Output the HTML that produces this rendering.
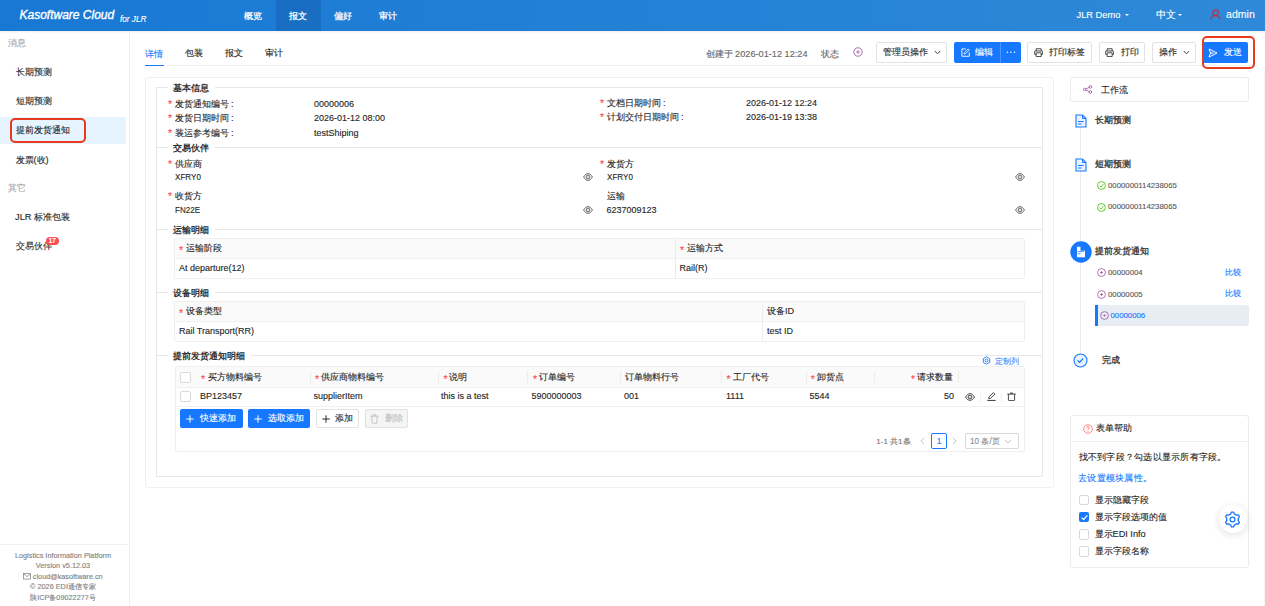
<!DOCTYPE html>
<html><head><meta charset="utf-8">
<style>
*{box-sizing:border-box;margin:0;padding:0}
html,body{width:1265px;height:606px;overflow:hidden;background:#fff}
body{font-family:"Liberation Sans",sans-serif;color:#262626;position:relative;font-size:9px;line-height:12px;-webkit-text-stroke:0.12px currentColor}
.a{position:absolute;white-space:nowrap}
.hdr{left:0;top:0;width:1265px;height:31px;background:linear-gradient(90deg,#1878d3,#2f89d8);box-shadow:0 1px 2px rgba(0,0,0,0.08)}
.nav{color:#fff;font-size:9.2px;top:9.5px;-webkit-text-stroke:0.25px #fff}
.navact{left:276px;top:0;width:45px;height:31px;background:rgba(0,40,100,0.16)}
.side{left:0;top:31px;width:129.5px;height:575px;border-right:1.5px solid #efefef}
.sgrp{color:#a6a6a6;font-size:9.3px}
.sitem{color:#262626;font-size:9.3px}
.foot{color:#7f7f7f;font-size:7.3px;line-height:10.5px;text-align:center;width:126px;left:0}
.tab{font-size:9.2px;color:#262626}
.btn{border:1px solid #e2e2e2;border-radius:2px;height:21px;background:#fff}
.bbtn{background:#1677ff;border-radius:2px;height:21px;color:#fff}
.star{color:#ff4d4f;font-size:10.5px;line-height:10px}
.lbl{font-size:9.2px;color:#262626}
.val{font-size:9px;color:#262626}
.leg{font-size:9.3px;font-weight:bold;color:#333;background:#fff;padding:0 5.5px;-webkit-text-stroke:0}
.hline{height:1px;background:#e8e8e8}
.tbl{border:1px solid #efefef;border-radius:2px}
.th{background:#fafafa}
.cdiv{width:1px;background:#ececec}
</style></head><body>

<!-- HEADER -->
<div class="a hdr"></div>
<div class="a navact"></div>
<div class="a" style="left:19.5px;top:8.5px;color:#fff;font-size:12px;font-style:italic;-webkit-text-stroke:0.35px #fff">Kasoftware Cloud</div>
<div class="a" style="left:120px;top:14px;color:#fff;font-size:8.2px;font-style:italic">for JLR</div>
<div class="a nav" style="left:244px">概览</div>
<div class="a nav" style="left:289px">报文</div>
<div class="a nav" style="left:334px">偏好</div>
<div class="a nav" style="left:379px">审计</div>
<div class="a" style="left:1076.5px;top:9px;color:#fff;font-size:9.3px">JLR Demo</div>
<div class="a" style="left:1124.5px;top:14.3px;width:0;height:0;border-left:2px solid transparent;border-right:2px solid transparent;border-top:2.5px solid #fff"></div>
<div class="a" style="left:1156px;top:9px;color:#fff;font-size:9.6px">中文</div>
<div class="a" style="left:1178px;top:14.3px;width:0;height:0;border-left:2px solid transparent;border-right:2px solid transparent;border-top:2.5px solid #fff"></div>
<svg class="a" style="left:1210px;top:9px" width="11" height="11" viewBox="0 0 11 11"><circle cx="5.5" cy="3.6" r="2.8" fill="none" stroke="#c0303f" stroke-width="1.2"/><path d="M1 10.4 Q1 6.6 5.5 6.6 Q10 6.6 10 10.4" fill="none" stroke="#c0303f" stroke-width="1.2"/></svg>
<div class="a" style="left:1226px;top:8px;color:#fff;font-size:10.6px">admin</div>

<!-- SIDEBAR -->
<div class="a side"></div>
<div class="a sgrp" style="left:7.5px;top:37px">消息</div>
<div class="a sitem" style="left:15.5px;top:66px">长期预测</div>
<div class="a sitem" style="left:15.5px;top:95px">短期预测</div>
<div class="a" style="left:0;top:117px;width:126px;height:27px;background:#e6f4ff;border-radius:0 2px 2px 0"></div>
<div class="a" style="left:9.5px;top:118px;width:76px;height:24.5px;border:2px solid #e8391f;border-radius:5px"></div>
<div class="a sitem" style="left:15.5px;top:124px">提前发货通知</div>
<div class="a sitem" style="left:15.5px;top:153.5px">发票(收)</div>
<div class="a sgrp" style="left:7.5px;top:182px">其它</div>
<div class="a sitem" style="left:15px;top:210.5px">JLR 标准包装</div>
<div class="a sitem" style="left:15.5px;top:239.5px">交易伙伴</div>
<div class="a" style="left:46px;top:237px;width:12.5px;height:8px;background:#ff4d4f;border-radius:4px;color:#fff;font-size:6.3px;line-height:8px;text-align:center;font-weight:bold">17</div>
<div class="a" style="left:0;top:544px;width:128px;height:1px;background:#efefef"></div>
<div class="a foot" style="top:550.5px">Logistics Information Platform</div>
<div class="a foot" style="top:561px">Version v5.12.03</div>
<div class="a foot" style="top:571.5px"><svg width="8" height="6.5" viewBox="0 0 8 6.5" style="vertical-align:-1px;margin-right:1.5px"><rect x="0.45" y="0.45" width="7.1" height="5.6" fill="none" stroke="#8a8a8a" stroke-width="0.8"/><path d="M0.6 0.8L4 3.6L7.4 0.8" fill="none" stroke="#8a8a8a" stroke-width="0.8"/></svg>cloud@kasoftware.cn</div>
<div class="a foot" style="top:582px">© 2026 EDI通信专家</div>
<div class="a foot" style="top:592.5px">陕ICP备09022277号</div>

<!-- TABS -->
<div class="a tab" style="left:145px;top:47.5px;color:#1677ff">详情</div>
<div class="a tab" style="left:185px;top:47px">包装</div>
<div class="a tab" style="left:225px;top:47px">报文</div>
<div class="a tab" style="left:265px;top:47px">审计</div>
<div class="a" style="left:145px;top:65.3px;width:1108px;height:1px;background:#f0f0f0"></div>
<div class="a" style="left:145px;top:64.5px;width:19px;height:1.6px;background:#1677ff"></div>

<!-- ACTION BAR -->
<div class="a" style="left:705.5px;top:47.5px;font-size:9.2px;color:#666">创建于 2026-01-12 12:24</div>
<div class="a" style="left:821px;top:47.5px;font-size:9.2px;color:#666">状态</div>
<svg class="a" style="left:852.7px;top:47.1px" width="10" height="10" viewBox="0 0 10 10"><circle cx="5" cy="5" r="4.2" fill="none" stroke="#a3579f" stroke-width="0.9"/><path d="M5 3.2V6.8M3.2 5H6.8" stroke="#a3579f" stroke-width="0.85"/></svg>
<div class="a btn" style="left:875.5px;top:41.5px;width:71.5px"></div>
<div class="a" style="left:883px;top:46px;font-size:9.2px">管理员操作</div>
<svg class="a" style="left:934px;top:50px" width="7" height="5" viewBox="0 0 7 5"><path d="M0.8 1 L3.5 3.8 L6.2 1" fill="none" stroke="#444" stroke-width="1"/></svg>
<div class="a bbtn" style="left:953.5px;top:41.5px;width:67.5px"></div>
<div class="a" style="left:999.5px;top:41.5px;width:1px;height:21px;background:#4a96ff"></div>
<svg class="a" style="left:960.5px;top:47.5px" width="9.2" height="9.2" viewBox="0 0 10 10"><path d="M5.2 1H1V9H9V4.8" fill="none" stroke="#fff" stroke-width="1"/><path d="M3.4 6.6L3.8 5L7.8 1L9 2.2L5 6.2Z" fill="none" stroke="#fff" stroke-width="0.9" stroke-linejoin="round"/></svg>
<div class="a" style="left:975px;top:46px;font-size:9.2px;color:#fff">编辑</div>
<svg class="a" style="left:1005.5px;top:51px" width="10" height="3" viewBox="0 0 10 3"><circle cx="1.3" cy="1.3" r="0.75" fill="#fff"/><circle cx="4.9" cy="1.3" r="0.75" fill="#fff"/><circle cx="8.5" cy="1.3" r="0.75" fill="#fff"/></svg>
<div class="a btn" style="left:1027px;top:41.5px;width:65px"></div>
<svg class="a" style="left:1033.7px;top:47.6px" width="9.3" height="9.3" viewBox="0 0 10 10"><path d="M2.3 3.2V0.8H7.7V3.2M2.3 7H1.2Q0.7 7 0.7 6.5V3.7Q0.7 3.2 1.2 3.2H8.8Q9.3 3.2 9.3 3.7V6.5Q9.3 7 8.8 7H7.7M2.3 5.2H7.7V9.2H2.3Z" fill="none" stroke="#333" stroke-width="0.95" stroke-linejoin="round"/></svg>
<div class="a" style="left:1049px;top:46px;font-size:9.2px">打印标签</div>
<div class="a btn" style="left:1099px;top:41.5px;width:46px"></div>
<svg class="a" style="left:1105.2px;top:47.6px" width="9.3" height="9.3" viewBox="0 0 10 10"><path d="M2.3 3.2V0.8H7.7V3.2M2.3 7H1.2Q0.7 7 0.7 6.5V3.7Q0.7 3.2 1.2 3.2H8.8Q9.3 3.2 9.3 3.7V6.5Q9.3 7 8.8 7H7.7M2.3 5.2H7.7V9.2H2.3Z" fill="none" stroke="#333" stroke-width="0.95" stroke-linejoin="round"/></svg>
<div class="a" style="left:1120.5px;top:46px;font-size:9.2px">打印</div>
<div class="a btn" style="left:1152px;top:41.5px;width:44px"></div>
<div class="a" style="left:1158.5px;top:46px;font-size:9.2px">操作</div>
<svg class="a" style="left:1182.5px;top:50px" width="7" height="5" viewBox="0 0 7 5"><path d="M0.8 1 L3.5 3.8 L6.2 1" fill="none" stroke="#444" stroke-width="1"/></svg>
<div class="a bbtn" style="left:1203px;top:41.5px;width:45.3px"></div>
<svg class="a" style="left:1208px;top:47.5px" width="10" height="10" viewBox="0 0 10 10"><path d="M1 1L9 5L1 9L2.6 5Z M2.6 5H5.5" fill="none" stroke="#fff" stroke-width="1" stroke-linejoin="round"/></svg>
<div class="a" style="left:1224px;top:46px;font-size:9.2px;color:#fff">发送</div>
<div class="a" style="left:1201.5px;top:35.5px;width:53.3px;height:33.3px;border:2px solid #e8391f;border-radius:5px"></div>

<!-- MAIN CARD -->
<div class="a" style="left:145px;top:77px;width:908.5px;height:410.5px;border:1px solid #f0f0f0;border-radius:3px"></div>
<div class="a" style="left:156px;top:87px;width:887px;height:389.5px;border:1px solid #e8e8e8;border-top:none"></div>
<div class="a hline" style="left:156px;top:87px;width:887px"></div>
<div class="a hline" style="left:156px;top:147px;width:887px"></div>
<div class="a hline" style="left:156px;top:229px;width:887px"></div>
<div class="a hline" style="left:156px;top:292px;width:887px"></div>
<div class="a hline" style="left:156px;top:355px;width:887px"></div>
<div class="a leg" style="left:167.5px;top:81.5px">基本信息</div>
<div class="a leg" style="left:167.5px;top:142px">交易伙伴</div>
<div class="a leg" style="left:167.5px;top:223.5px">运输明细</div>
<div class="a leg" style="left:167.5px;top:286.5px">设备明细</div>
<div class="a leg" style="left:167.5px;top:349.5px">提前发货通知明细</div>

<!-- basic info -->
<div class="a star" style="left:168px;top:99px">*</div><div class="a lbl" style="left:174.5px;top:98px">发货通知编号<span style="margin-left:2.6px">:</span></div><div class="a val" style="left:314px;top:98px">00000006</div>
<div class="a star" style="left:168px;top:113px">*</div><div class="a lbl" style="left:174.5px;top:112px">发货日期时间<span style="margin-left:2.6px">:</span></div><div class="a val" style="left:314px;top:112px">2026-01-12 08:00</div>
<div class="a star" style="left:168px;top:127.5px">*</div><div class="a lbl" style="left:174.5px;top:126.5px">装运参考编号<span style="margin-left:2.6px">:</span></div><div class="a val" style="left:314px;top:126.5px">testShiping</div>
<div class="a star" style="left:600px;top:98px">*</div><div class="a lbl" style="left:606.5px;top:97px">文档日期时间<span style="margin-left:2.6px">:</span></div><div class="a val" style="left:746px;top:97px">2026-01-12 12:24</div>
<div class="a star" style="left:600px;top:112px">*</div><div class="a lbl" style="left:606.5px;top:111px">计划交付日期时间<span style="margin-left:2.6px">:</span></div><div class="a val" style="left:746px;top:111px">2026-01-19 13:38</div>

<!-- partners -->
<div class="a star" style="left:168px;top:158.5px">*</div><div class="a lbl" style="left:174.5px;top:157.5px">供应商</div><div class="a val" style="left:174.5px;top:171px;transform:scaleX(0.87);transform-origin:0 0;font-size:9.3px">XFRY0</div>
<div class="a star" style="left:168px;top:191px">*</div><div class="a lbl" style="left:174.5px;top:190px">收货方</div><div class="a val" style="left:174.5px;top:204px;transform:scaleX(0.87);transform-origin:0 0;font-size:9.3px">FN22E</div>
<div class="a star" style="left:600px;top:158.5px">*</div><div class="a lbl" style="left:606.5px;top:157.5px">发货方</div><div class="a val" style="left:606.5px;top:171px;transform:scaleX(0.87);transform-origin:0 0;font-size:9.3px">XFRY0</div>
<div class="a lbl" style="left:606.5px;top:190px">运输</div><div class="a val" style="left:606.5px;top:204px">6237009123</div>
<svg class="a" style="left:583px;top:172.8px" width="10" height="8" viewBox="0 0 10 8"><path d="M0.6 4C1.9 1.6 3.4 0.7 5 0.7C6.6 0.7 8.1 1.6 9.4 4C8.1 6.4 6.6 7.3 5 7.3C3.4 7.3 1.9 6.4 0.6 4Z" fill="none" stroke="#555" stroke-width="0.9"/><circle cx="5" cy="4" r="1.9" fill="none" stroke="#555" stroke-width="0.9"/><circle cx="5" cy="4" r="0.5" fill="#555"/></svg>
<svg class="a" style="left:583px;top:205.5px" width="10" height="8" viewBox="0 0 10 8"><path d="M0.6 4C1.9 1.6 3.4 0.7 5 0.7C6.6 0.7 8.1 1.6 9.4 4C8.1 6.4 6.6 7.3 5 7.3C3.4 7.3 1.9 6.4 0.6 4Z" fill="none" stroke="#555" stroke-width="0.9"/><circle cx="5" cy="4" r="1.9" fill="none" stroke="#555" stroke-width="0.9"/><circle cx="5" cy="4" r="0.5" fill="#555"/></svg>
<svg class="a" style="left:1015.2px;top:172.8px" width="10" height="8" viewBox="0 0 10 8"><path d="M0.6 4C1.9 1.6 3.4 0.7 5 0.7C6.6 0.7 8.1 1.6 9.4 4C8.1 6.4 6.6 7.3 5 7.3C3.4 7.3 1.9 6.4 0.6 4Z" fill="none" stroke="#555" stroke-width="0.9"/><circle cx="5" cy="4" r="1.9" fill="none" stroke="#555" stroke-width="0.9"/><circle cx="5" cy="4" r="0.5" fill="#555"/></svg>
<svg class="a" style="left:1015.2px;top:205.5px" width="10" height="8" viewBox="0 0 10 8"><path d="M0.6 4C1.9 1.6 3.4 0.7 5 0.7C6.6 0.7 8.1 1.6 9.4 4C8.1 6.4 6.6 7.3 5 7.3C3.4 7.3 1.9 6.4 0.6 4Z" fill="none" stroke="#555" stroke-width="0.9"/><circle cx="5" cy="4" r="1.9" fill="none" stroke="#555" stroke-width="0.9"/><circle cx="5" cy="4" r="0.5" fill="#555"/></svg>

<!-- transport table -->
<div class="a tbl" style="left:174px;top:238px;width:851px;height:40.5px"></div>
<div class="a th" style="left:175px;top:239px;width:849px;height:19px"></div>
<div class="a" style="left:175px;top:258px;width:849px;height:1px;background:#f0f0f0"></div>
<div class="a cdiv" style="left:674.5px;top:239px;height:39px"></div>
<div class="a star" style="left:179px;top:245px">*</div><div class="a lbl" style="left:186px;top:242px">运输阶段</div>
<div class="a star" style="left:680px;top:245px">*</div><div class="a lbl" style="left:687px;top:242px">运输方式</div>
<div class="a val" style="left:179px;top:262px">At departure(12)</div>
<div class="a val" style="left:679.5px;top:262px">Rail(R)</div>

<!-- equipment table -->
<div class="a tbl" style="left:174px;top:301px;width:851px;height:40.5px"></div>
<div class="a th" style="left:175px;top:302px;width:849px;height:19px"></div>
<div class="a" style="left:175px;top:321px;width:849px;height:1px;background:#f0f0f0"></div>
<div class="a cdiv" style="left:762px;top:302px;height:39px"></div>
<div class="a star" style="left:179px;top:308px">*</div><div class="a lbl" style="left:186px;top:305px">设备类型</div>
<div class="a lbl" style="left:767px;top:305px">设备ID</div>
<div class="a val" style="left:179px;top:325px">Rail Transport(RR)</div>
<div class="a val" style="left:767px;top:325px">test ID</div>

<!-- custom col -->
<svg class="a" style="left:982px;top:356.2px" width="9" height="9" viewBox="0 0 9 9"><path d="M4.5 0.8L7.7 2.65V6.35L4.5 8.2L1.3 6.35V2.65Z" fill="none" stroke="#1677ff" stroke-width="0.9"/><circle cx="4.5" cy="4.5" r="1.4" fill="none" stroke="#1677ff" stroke-width="0.9"/></svg>
<div class="a" style="left:995px;top:354.8px;font-size:8.4px;color:#3d8bff">定制列</div>

<!-- items table -->
<div class="a tbl" style="left:174.5px;top:366px;width:850px;height:85.5px"></div>
<div class="a th" style="left:175.5px;top:367px;width:848px;height:20px"></div>
<div class="a" style="left:175.5px;top:387px;width:848px;height:1px;background:#f0f0f0"></div>
<div class="a" style="left:175.5px;top:406px;width:848px;height:1px;background:#f0f0f0"></div>
<div class="a" style="left:180px;top:372px;width:11px;height:11px;border:1px solid #d9d9d9;border-radius:2px;background:#fff"></div>
<div class="a" style="left:180px;top:391px;width:11px;height:11px;border:1px solid #d9d9d9;border-radius:2px;background:#fff"></div>
<div class="a cdiv" style="left:310px;top:371px;height:12px"></div>
<div class="a cdiv" style="left:438px;top:371px;height:12px"></div>
<div class="a cdiv" style="left:527px;top:371px;height:12px"></div>
<div class="a cdiv" style="left:620px;top:371px;height:12px"></div>
<div class="a cdiv" style="left:721px;top:371px;height:12px"></div>
<div class="a cdiv" style="left:805.5px;top:371px;height:12px"></div>
<div class="a cdiv" style="left:873.5px;top:371px;height:12px"></div>
<div class="a cdiv" style="left:957.5px;top:371px;height:12px"></div>
<div class="a star" style="left:201px;top:374px">*</div><div class="a lbl" style="left:207.5px;top:371px">买方物料编号</div>
<div class="a star" style="left:315px;top:374px">*</div><div class="a lbl" style="left:321px;top:371px">供应商物料编号</div>
<div class="a star" style="left:443.5px;top:374px">*</div><div class="a lbl" style="left:449px;top:371px">说明</div>
<div class="a star" style="left:533px;top:374px">*</div><div class="a lbl" style="left:539px;top:371px">订单编号</div>
<div class="a lbl" style="left:624.5px;top:371px">订单物料行号</div>
<div class="a star" style="left:726.5px;top:374px">*</div><div class="a lbl" style="left:733px;top:371px">工厂代号</div>
<div class="a star" style="left:810.8px;top:374px">*</div><div class="a lbl" style="left:817px;top:371px">卸货点</div>
<div class="a star" style="left:911px;top:374px">*</div><div class="a lbl" style="left:917px;top:371px">请求数量</div>
<div class="a val" style="left:200px;top:390px">BP123457</div>
<div class="a val" style="left:313.5px;top:390px">supplierItem</div>
<div class="a val" style="left:441px;top:390px">this is a test</div>
<div class="a val" style="left:531.5px;top:390px">5900000003</div>
<div class="a val" style="left:624px;top:390px">001</div>
<div class="a val" style="left:726px;top:390px">1111</div>
<div class="a val" style="left:809.5px;top:390px">5544</div>
<div class="a val" style="left:944px;top:390px">50</div>
<svg class="a" style="left:965.3px;top:392.6px" width="10" height="8" viewBox="0 0 10 8"><path d="M0.6 4C1.9 1.6 3.4 0.7 5 0.7C6.6 0.7 8.1 1.6 9.4 4C8.1 6.4 6.6 7.3 5 7.3C3.4 7.3 1.9 6.4 0.6 4Z" fill="none" stroke="#333" stroke-width="0.9"/><circle cx="5" cy="4" r="1.9" fill="none" stroke="#333" stroke-width="0.9"/><circle cx="5" cy="4" r="0.5" fill="#333"/></svg>
<div class="a cdiv" style="left:980.3px;top:392.5px;height:9px;background:#f0f0f0"></div>
<svg class="a" style="left:986.5px;top:392.2px" width="9" height="9" viewBox="0 0 9 9"><path d="M1.6 6.5L2 4.9L6.4 0.6L7.9 2.1L3.5 6.4Z" fill="none" stroke="#333" stroke-width="0.9" stroke-linejoin="round"/><path d="M0.4 8.4H8.6" stroke="#333" stroke-width="1"/></svg>
<div class="a cdiv" style="left:1000.8px;top:392.5px;height:9px;background:#f0f0f0"></div>
<svg class="a" style="left:1007px;top:392px" width="9" height="9" viewBox="0 0 9 9"><path d="M0.3 2.1H8.7" stroke="#333" stroke-width="0.9"/><path d="M3 2.1V1.1Q3 0.4 3.7 0.4H5.3Q6 0.4 6 1.1V2.1Z" fill="#555"/><path d="M1.4 2.1V7.9Q1.4 8.6 2.1 8.6H6.9Q7.6 8.6 7.6 7.9V2.1" fill="none" stroke="#333" stroke-width="0.9"/></svg>

<!-- buttons -->
<div class="a bbtn" style="left:180px;top:409px;width:62.5px;height:19px"></div>
<svg class="a" style="left:186.2px;top:415px" width="8" height="8" viewBox="0 0 8 8"><path d="M4 0.3V7.7M0.3 4H7.7" stroke="#fff" stroke-width="1"/></svg>
<div class="a" style="left:200.3px;top:412.3px;font-size:9.35px;color:#fff">快速添加</div>
<div class="a bbtn" style="left:248px;top:409px;width:62px;height:19px"></div>
<svg class="a" style="left:254px;top:415px" width="8" height="8" viewBox="0 0 8 8"><path d="M4 0.3V7.7M0.3 4H7.7" stroke="#fff" stroke-width="1"/></svg>
<div class="a" style="left:268px;top:412.3px;font-size:9.35px;color:#fff">选取添加</div>
<div class="a btn" style="left:315.5px;top:409px;width:43.5px;height:19px"></div>
<svg class="a" style="left:321.5px;top:415px" width="8" height="8" viewBox="0 0 8 8"><path d="M4 0.3V7.7M0.3 4H7.7" stroke="#262626" stroke-width="1"/></svg>
<div class="a" style="left:335.3px;top:412.3px;font-size:9.35px">添加</div>
<div class="a btn" style="left:364.5px;top:409px;width:43.5px;height:19px;background:#f5f5f5"></div>
<svg class="a" style="left:370px;top:413.5px" width="9" height="10" viewBox="0 0 9 10"><path d="M0.5 2.2H8.5M3 2.2V0.8H6V2.2M1.7 2.2L2.2 9.2H6.8L7.3 2.2" fill="none" stroke="#bfbfbf" stroke-width="0.9"/></svg>
<div class="a" style="left:385px;top:412.3px;font-size:9.35px;color:#bfbfbf">删除</div>

<!-- pagination -->
<div class="a" style="left:876.3px;top:436px;font-size:8px;color:#737373">1-1 共1条</div>
<svg class="a" style="left:920px;top:437px" width="5" height="8" viewBox="0 0 5 8"><path d="M4 0.8L1 4L4 7.2" fill="none" stroke="#bfbfbf" stroke-width="0.9"/></svg>
<div class="a" style="left:931.2px;top:433px;width:15.7px;height:16px;border:1px solid #1677ff;border-radius:2px;color:#1677ff;font-size:8.5px;line-height:14px;text-align:center">1</div>
<svg class="a" style="left:952px;top:437px" width="5" height="8" viewBox="0 0 5 8"><path d="M1 0.8L4 4L1 7.2" fill="none" stroke="#bfbfbf" stroke-width="0.9"/></svg>
<div class="a" style="left:964.5px;top:433px;width:54.5px;height:16px;border:1px solid #d9d9d9;border-radius:2px"></div>
<div class="a" style="left:970px;top:436px;font-size:8.2px;color:#8c8c8c">10 条/页</div>
<svg class="a" style="left:1003.8px;top:439px" width="8" height="5" viewBox="0 0 8 5"><path d="M0.8 0.8L4 4L7.2 0.8" fill="none" stroke="#bfbfbf" stroke-width="0.9"/></svg>

<!-- RIGHT PANEL -->
<div class="a" style="left:1069.5px;top:77px;width:179px;height:25px;border:1px solid #ececec;border-radius:2px"></div>
<svg class="a" style="left:1083.4px;top:84.8px" width="9.5" height="9" viewBox="0 0 9.5 9"><rect x="0.5" y="3.4" width="2.2" height="2.2" rx="0.9" fill="none" stroke="#a3579f" stroke-width="0.9"/><circle cx="7.4" cy="1.9" r="1.3" fill="none" stroke="#a3579f" stroke-width="0.9"/><circle cx="7.4" cy="7" r="1.3" fill="none" stroke="#a3579f" stroke-width="0.9"/><path d="M2.7 4.1L6.1 2.4M2.7 4.9L6.1 6.5" stroke="#a3579f" stroke-width="0.9"/></svg>
<div class="a" style="left:1101px;top:83.5px;font-size:9.2px">工作流</div>
<div class="a" style="left:1080.3px;top:128px;width:1.2px;height:225px;background:#ececec"></div>
<svg class="a" style="left:1075px;top:114px" width="12" height="14" viewBox="0 0 12 14"><path d="M1 1H7.5L11 4.5V13H1Z" fill="#eaf2ff" stroke="#1677ff" stroke-width="1.1"/><path d="M7.5 1V4.5H11" fill="none" stroke="#1677ff" stroke-width="1"/><path d="M3 7.5H8.5M3 10H6.5" stroke="#1677ff" stroke-width="1"/></svg>
<div class="a" style="left:1095px;top:114px;font-size:9.2px;font-weight:bold;color:#444;-webkit-text-stroke:0">长期预测</div>
<svg class="a" style="left:1075px;top:157.5px" width="12" height="14" viewBox="0 0 12 14"><path d="M1 1H7.5L11 4.5V13H1Z" fill="#eaf2ff" stroke="#1677ff" stroke-width="1.1"/><path d="M7.5 1V4.5H11" fill="none" stroke="#1677ff" stroke-width="1"/><path d="M3 7.5H8.5M3 10H6.5" stroke="#1677ff" stroke-width="1"/></svg>
<div class="a" style="left:1095px;top:158px;font-size:9.2px;font-weight:bold;color:#444;-webkit-text-stroke:0">短期预测</div>
<svg class="a" style="left:1096.5px;top:181px" width="9" height="9" viewBox="0 0 9 9"><circle cx="4.5" cy="4.5" r="3.9" fill="none" stroke="#52c41a" stroke-width="0.9"/><path d="M2.6 4.6L4 6L6.4 3.2" fill="none" stroke="#52c41a" stroke-width="0.9"/></svg>
<div class="a" style="left:1108px;top:179.5px;font-size:7.8px;color:#595959">0000000114238065</div>
<svg class="a" style="left:1096.5px;top:202.5px" width="9" height="9" viewBox="0 0 9 9"><circle cx="4.5" cy="4.5" r="3.9" fill="none" stroke="#52c41a" stroke-width="0.9"/><path d="M2.6 4.6L4 6L6.4 3.2" fill="none" stroke="#52c41a" stroke-width="0.9"/></svg>
<div class="a" style="left:1108px;top:201px;font-size:7.8px;color:#595959">0000000114238065</div>
<svg class="a" style="left:1070px;top:240.6px" width="22" height="22" viewBox="0 0 22 22"><circle cx="11" cy="11" r="10.7" fill="#1677ff"/><path d="M7 5.7H10.5V9.7H15V16.3H7Z" fill="#fff"/><path d="M7.6 10.6H13.8M7.6 12.7H10.6" stroke="#4d97ff" stroke-width="1"/></svg>
<div class="a" style="left:1095px;top:245px;font-size:9.2px;font-weight:bold;color:#444;-webkit-text-stroke:0">提前发货通知</div>
<svg class="a" style="left:1096.5px;top:268px" width="9" height="9" viewBox="0 0 9 9"><circle cx="4.5" cy="4.5" r="3.9" fill="none" stroke="#a3579f" stroke-width="0.8"/><path d="M4.5 3V6M3 4.5H6" stroke="#a3579f" stroke-width="0.8"/></svg>
<div class="a" style="left:1108px;top:266.8px;font-size:7.8px;color:#595959">00000004</div>
<div class="a" style="left:1225px;top:265.5px;font-size:8.4px;color:#1677ff">比较</div>
<svg class="a" style="left:1096.5px;top:290px" width="9" height="9" viewBox="0 0 9 9"><circle cx="4.5" cy="4.5" r="3.9" fill="none" stroke="#a3579f" stroke-width="0.8"/><path d="M4.5 3V6M3 4.5H6" stroke="#a3579f" stroke-width="0.8"/></svg>
<div class="a" style="left:1108px;top:288.8px;font-size:7.8px;color:#595959">00000005</div>
<div class="a" style="left:1225px;top:287px;font-size:8.4px;color:#1677ff">比较</div>
<div class="a" style="left:1094.5px;top:304.5px;width:154px;height:21.5px;background:#e8ecf3;border-radius:0 2px 2px 0;border-left:3px solid #1677ff"></div>
<svg class="a" style="left:1099.5px;top:311px" width="9" height="9" viewBox="0 0 9 9"><circle cx="4.5" cy="4.5" r="3.9" fill="none" stroke="#a3579f" stroke-width="0.8"/><circle cx="4.5" cy="4.5" r="1.1" fill="#a3579f"/></svg>
<div class="a" style="left:1110.5px;top:310.3px;font-size:7.8px;color:#1677ff">00000006</div>
<svg class="a" style="left:1073.4px;top:352.6px" width="15" height="15" viewBox="0 0 15 15"><circle cx="7.5" cy="7.5" r="6.5" fill="#e9f3ff" stroke="#1677ff" stroke-width="1.1"/><path d="M4.6 7.4L6.6 9.3L10.2 5.5" fill="none" stroke="#1677ff" stroke-width="1.2"/></svg>
<div class="a" style="left:1101.5px;top:353.5px;font-size:9.2px;font-weight:bold;color:#444;-webkit-text-stroke:0">完成</div>

<!-- help card -->
<div class="a" style="left:1070px;top:415px;width:178.5px;height:152.5px;border:1px solid #ececec;border-radius:3px"></div>
<div class="a" style="left:1071px;top:440.5px;width:176.5px;height:1px;background:#ececec"></div>
<svg class="a" style="left:1083px;top:423.5px" width="10" height="10" viewBox="0 0 10 10"><circle cx="5" cy="5" r="4.3" fill="none" stroke="#ff7875" stroke-width="0.9"/><path d="M3.6 3.9Q3.6 2.6 5 2.6Q6.4 2.6 6.4 3.8Q6.4 4.6 5 5.2V6" fill="none" stroke="#ff7875" stroke-width="0.9"/><circle cx="5" cy="7.4" r="0.5" fill="#ff7875"/></svg>
<div class="a" style="left:1096.3px;top:422.3px;font-size:9.4px">表单帮助</div>
<div class="a" style="left:1078.5px;top:451px;font-size:9.2px;letter-spacing:0.25px">找不到字段？勾选以显示所有字段。</div>
<div class="a" style="left:1078px;top:472.3px;font-size:9.2px;letter-spacing:0.3px;color:#1677ff">去设置模块属性。</div>
<div class="a" style="left:1078.5px;top:494.5px;width:10.5px;height:10.5px;border:1px solid #d9d9d9;border-radius:2px"></div>
<div class="a" style="left:1094.5px;top:494px;font-size:9.2px">显示隐藏字段</div>
<div class="a" style="left:1078.5px;top:511.5px;width:10.5px;height:10.5px;background:#1677ff;border-radius:2px"></div>
<svg class="a" style="left:1078.5px;top:511.5px" width="11" height="11" viewBox="0 0 11 11"><path d="M2.6 5.6L4.6 7.5L8.4 3.4" fill="none" stroke="#fff" stroke-width="1.3"/></svg>
<div class="a" style="left:1094.5px;top:511px;font-size:9.2px">显示字段选项的值</div>
<div class="a" style="left:1078.5px;top:529px;width:10.5px;height:10.5px;border:1px solid #d9d9d9;border-radius:2px"></div>
<div class="a" style="left:1094.5px;top:528px;font-size:9.2px">显示EDI Info</div>
<div class="a" style="left:1078.5px;top:546px;width:10.5px;height:10.5px;border:1px solid #d9d9d9;border-radius:2px"></div>
<div class="a" style="left:1094.5px;top:545px;font-size:9.2px">显示字段名称</div>
<div class="a" style="left:1218.5px;top:505px;width:28px;height:28px;border-radius:50%;background:#fff;box-shadow:0 2px 8px rgba(0,0,0,0.12)"></div>
<svg class="a" style="left:1224px;top:510.5px" width="17" height="17" viewBox="0 0 17 17"><path d="M5.55 3.39 L6.55 3.14 L7.59 1.06 L9.41 1.06 L10.45 3.14 L11.45 3.39 L12.16 4.13 L14.49 3.99 L15.40 5.57 L14.11 7.51 L14.40 8.50 L14.11 9.49 L15.40 11.43 L14.49 13.01 L12.16 12.87 L11.45 13.61 L10.45 13.86 L9.41 15.94 L7.59 15.94 L6.55 13.86 L5.55 13.61 L4.84 12.87 L2.51 13.01 L1.60 11.43 L2.89 9.49 L2.60 8.50 L2.89 7.51 L1.60 5.57 L2.51 3.99 L4.84 4.13Z" fill="none" stroke="#1677ff" stroke-width="1.3" stroke-linejoin="round"/><circle cx="8.5" cy="8.5" r="2.4" fill="none" stroke="#1677ff" stroke-width="1.3"/></svg>
<div class="a" style="left:1264px;top:70px;width:1px;height:536px;background:#f5f5f5"></div>

</body></html>
